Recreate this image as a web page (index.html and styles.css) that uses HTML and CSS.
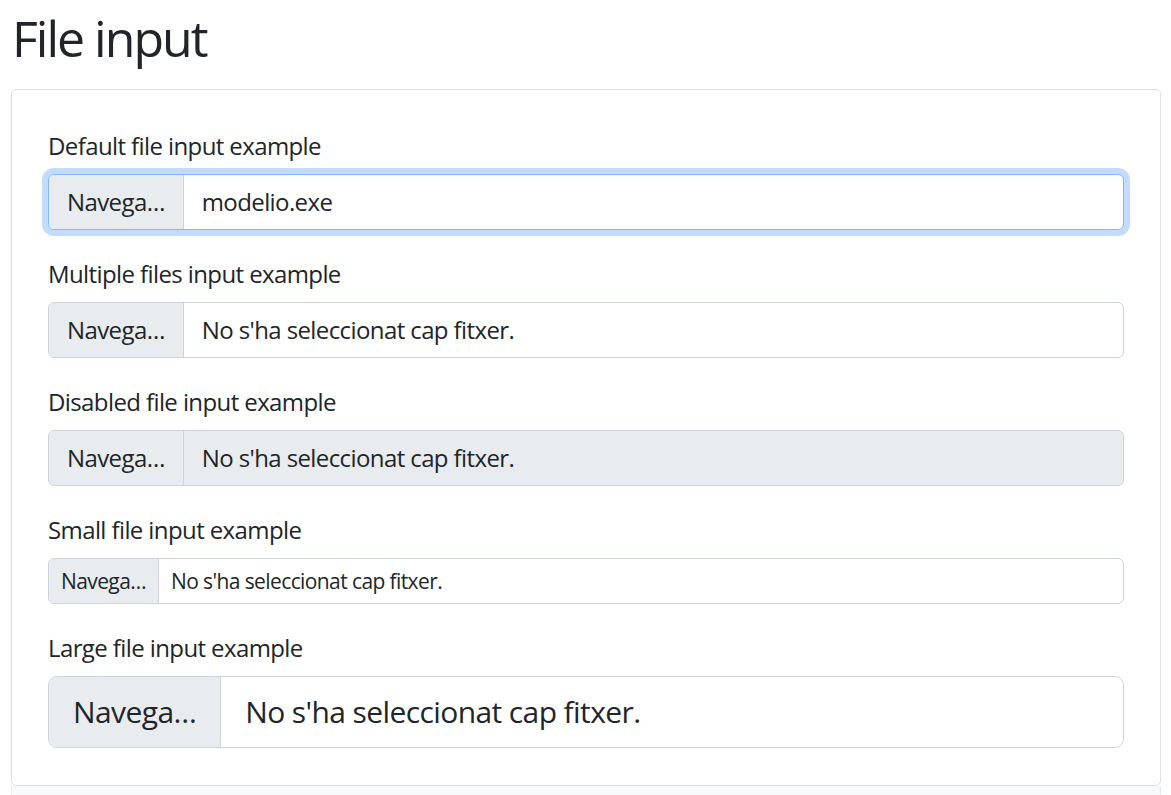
FILE: index.html
```html
<!DOCTYPE html>
<html lang="ca">
<head>
<meta charset="utf-8">
<title>File input</title>
<link rel="stylesheet" href="styles.css">
</head>
<body>
<main class="page">
  <h1 class="title">File input</h1>
  <section class="example">
    <div class="field">
      <label class="label">Default file input example</label>
      <div class="file focused"><span class="file-btn">Navega…</span><span class="file-name">modelio.exe</span></div>
    </div>
    <div class="field">
      <label class="label">Multiple files input example</label>
      <div class="file"><span class="file-btn">Navega…</span><span class="file-name">No s'ha seleccionat cap fitxer.</span></div>
    </div>
    <div class="field">
      <label class="label">Disabled file input example</label>
      <div class="file disabled"><span class="file-btn">Navega…</span><span class="file-name">No s'ha seleccionat cap fitxer.</span></div>
    </div>
    <div class="field">
      <label class="label">Small file input example</label>
      <div class="file sm"><span class="file-btn">Navega…</span><span class="file-name">No s'ha seleccionat cap fitxer.</span></div>
    </div>
    <div class="field last">
      <label class="label">Large file input example</label>
      <div class="file lg"><span class="file-btn">Navega…</span><span class="file-name">No s'ha seleccionat cap fitxer.</span></div>
    </div>
  </section>
  <div class="below"></div>
</main>
</body>
</html>
```

FILE: styles.css
```css
html, body {
  margin: 0;
  padding: 0;
  background: #ffffff;
}
body {
  font-family: "Open Sans", "Noto Sans", sans-serif;
  color: #212529;
  font-size: 24px;
  line-height: 1.5;
  letter-spacing: -0.025em;
}
.page {
  padding: 0 10px 0 11px;
}
.title {
  margin: 8px 0 21px 1px;
  font-size: 50px;
  line-height: 60px;
  font-weight: 400;
  letter-spacing: -0.04em;
}
.example {
  border: 1px solid #dee2e6;
  border-radius: 5px;
  padding: 36px 36px 37px 36px;
  display: flex;
  flex-direction: column;
  gap: 24px;
}
.field {
  display: flex;
  flex-direction: column;
  gap: 10px;
}
.label {
  display: block;
  padding-top: 2px;
  font-size: 24px;
  line-height: 36px;
}
.file {
  display: flex;
  align-items: stretch;
  border: 1px solid #ced4da;
  border-radius: 6px;
  background: #fff;
  font-size: 24px;
  line-height: 36px;
  overflow: hidden;
}
.file-btn {
  background: #e9ecef;
  border-right: 1px solid #ced4da;
  padding: 9px 18px;
  white-space: nowrap;
}
.file-name {
  padding: 9px 18px;
  white-space: nowrap;
}
.file.focused {
  border-color: #86b7fe;
  box-shadow: 0 0 0 6px rgba(13, 110, 253, 0.25);
  overflow: visible;
}
.file.focused .file-btn {
  border-radius: 5px 0 0 5px;
}
.file.disabled {
  background: #e9ecef;
}
.file.sm {
  font-size: 21px;
  line-height: 32px;
}
.file.sm .file-btn,
.file.sm .file-name {
  padding: 6px 12px;
}
.file.lg {
  font-size: 30px;
  line-height: 46px;
  border-radius: 9px;
}
.file.lg .file-btn,
.file.lg .file-name {
  padding: 12px 24px;
}
.below {
  height: 12px;
  background: #f8f9fa;
  border-left: 1px solid #e9ecef;
  border-right: 1px solid #e9ecef;
}
```
